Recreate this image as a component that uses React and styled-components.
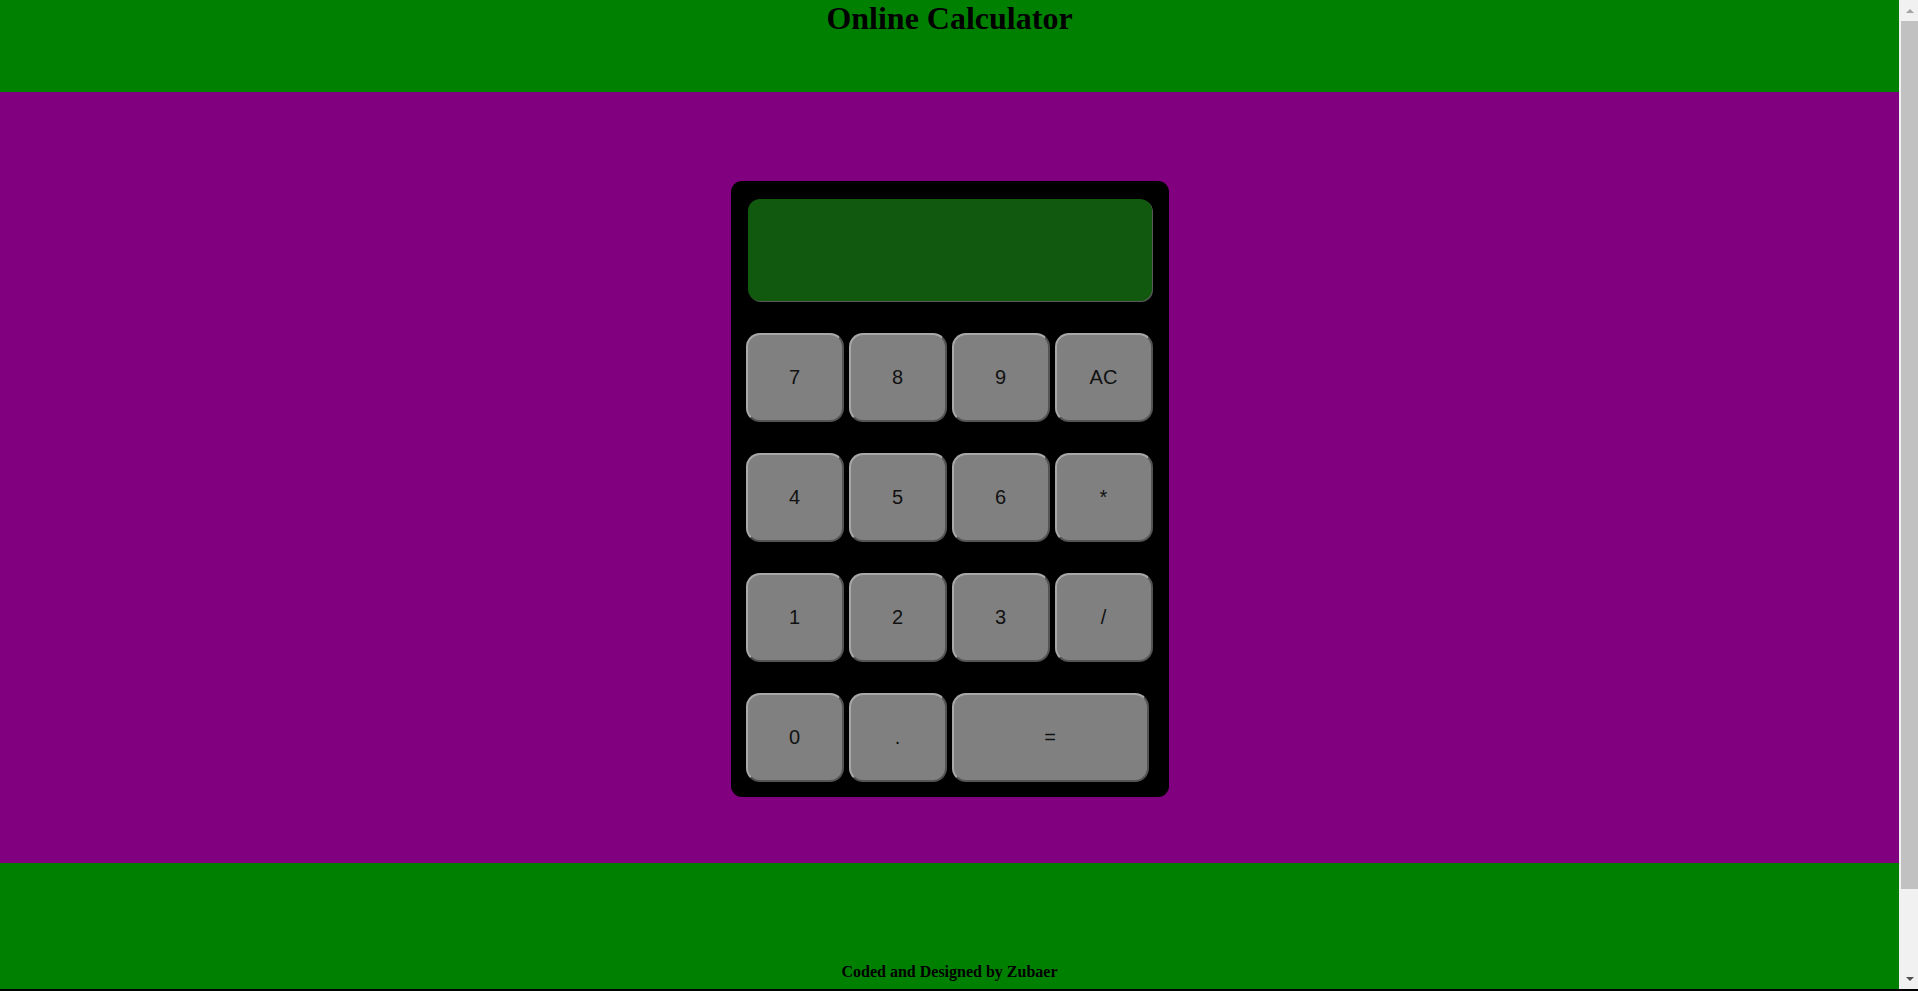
import React from 'react'
import styled, { createGlobalStyle } from 'styled-components'

const GlobalStyle = createGlobalStyle`
    body{
        margin: 0;
        background-color: #000;
        font-family: "Liberation Serif", "Times New Roman", serif;
    }
`

// window frame: page on the left, the browser's scrollbar on the right
const Frame = styled.div`
    display: grid;
    grid-template-columns: 1fr 19px;
    height: 989px;
    overflow: hidden;
`

const Page = styled.div`
    background-color: #000;
`

const Header = styled.header`
    height: 92px;
    background-color: #008000;
    text-align: center;
    h1{
        margin: 0;
        font-size: 32px;
        font-weight: bold;
        color: #000;
    }
`

const Main = styled.main`
    height: 771px;
    background-color: #800080;
    display: flex;
    justify-content: center;
    padding-top: 89px;
    box-sizing: border-box;
`

const Calculator = styled.div`
    width: 438px;
    height: 616px;
    box-sizing: border-box;
    padding: 18px 16px 15px 15px;
    background-color: #000;
    border-radius: 11px;
`

const Display = styled.div`
    width: 404px;
    height: 102px;
    margin-left: 2px;
    background-color: #10590f;
    border-radius: 12px;
    box-shadow: 1px 1px 0 0 #5a5a5a;
`

const Keys = styled.div`
    display: grid;
    grid-template-columns: repeat(4, 98px);
    grid-auto-rows: 89px;
    column-gap: 5px;
    row-gap: 31px;
    margin-top: 32px;
`

const Key = styled.button`
    width: ${p => p.$wide ? '197px' : '98px'};
    grid-column: ${p => p.$wide ? 'span 2' : 'auto'};
    height: 89px;
    box-sizing: border-box;
    background-color: #808080;
    border: 2px outset #a8a8a8;
    border-radius: 14px;
    font-family: "Liberation Sans", Arial, sans-serif;
    font-size: 20px;
    color: #111;
    cursor: pointer;
    padding: 0;
`

const Footer = styled.footer`
    height: 126px;
    background-color: #008000;
    display: flex;
    align-items: flex-end;
    justify-content: center;
    padding-bottom: 8px;
    box-sizing: border-box;
    p{
        margin: 0;
        font-size: 16px;
        font-weight: bold;
        color: #000;
    }
`

const Scrollbar = styled.div`
    display: flex;
    flex-direction: column;
    align-items: flex-end;
    background-color: #f1f1f1;
    height: 989px;
`

const Arrow = styled.div`
    width: 17px;
    height: 21px;
    display: flex;
    align-items: center;
    justify-content: center;
    &::after{
        content: '';
        border-left: 4px solid transparent;
        border-right: 4px solid transparent;
        ${p => p.$down
            ? 'border-top: 4px solid #505050;'
            : 'border-bottom: 4px solid #a3a3a3;'}
    }
`

const Thumb = styled.div`
    width: 17px;
    height: 868px;
    background-color: #c1c1c1;
`

const Track = styled.div`
    flex: 1;
`

const rows = [
    ['7', '8', '9', 'AC'],
    ['4', '5', '6', '*'],
    ['1', '2', '3', '/'],
    ['0', '.'],
]

const App = () => (
    <Frame>
        <GlobalStyle />
        <Page>
            <Header>
                <h1>Online Calculator</h1>
            </Header>
            <Main>
                <Calculator>
                    <Display />
                    <Keys>
                        {rows.flat().map(k => <Key key={k}>{k}</Key>)}
                        <Key $wide>=</Key>
                    </Keys>
                </Calculator>
            </Main>
            <Footer>
                <p>Coded and Designed by Zubaer</p>
            </Footer>
        </Page>
        <Scrollbar>
            <Arrow />
            <Thumb />
            <Track />
            <Arrow $down />
        </Scrollbar>
    </Frame>
)

export default App
